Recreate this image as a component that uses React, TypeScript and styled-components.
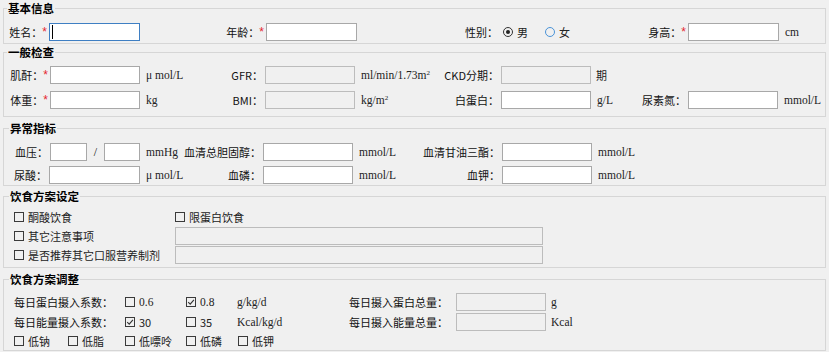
import React from "react";
import styled, { createGlobalStyle } from "styled-components";

const GlobalStyle = createGlobalStyle`
  html, body {
    margin: 0;
    background: #f0f0f0;
  }
  body {
    font-family: "Noto Sans CJK SC", "Noto Sans", sans-serif;
    font-size: 11px;
    color: #111;
  }
  #root {
    width: 829px;
    height: 352px;
    overflow: hidden;
  }
`;

const Group = styled.fieldset<{ $mt: number; $pt: number; $pb: number }>`
  margin: ${({ $mt }) => $mt}px 3px 0 3px;
  padding: ${({ $pt }) => $pt}px 0 ${({ $pb }) => $pb}px 5px;
  border: 1px solid #d6d6d6;
  min-width: 0;
  display: flex;
  flex-direction: column;
`;

const Legend = styled.legend<{ $x?: number }>`
  padding: 0 1px;
  margin-left: ${({ $x }) => $x ?? 0}px;
  font-weight: 700;
  font-size: 11.5px;
  line-height: 14px;
  color: #000;
`;

const Row = styled.div<{ $cols: string; $h: number; $mt?: number }>`
  display: grid;
  grid-template-columns: ${({ $cols }) => $cols};
  height: ${({ $h }) => $h}px;
  margin-top: ${({ $mt }) => $mt ?? 0}px;
  align-items: center;
  white-space: nowrap;
`;

const Label = styled.span<{ $left?: boolean; $pl?: number }>`
  display: flex;
  align-items: center;
  justify-content: ${({ $left }) => ($left ? "flex-start" : "flex-end")};
  padding-right: ${({ $left }) => ($left ? 0 : 2)}px;
  padding-left: ${({ $pl }) => $pl ?? 0}px;
  font-size: 11px;
  line-height: 14px;
  color: #111;
`;

const Star = styled.span`
  color: #e5262f;
  margin-left: 0;
  font-family: "Liberation Sans", sans-serif;
  font-size: 12px;
`;

const Unit = styled.span<{ $pl?: number; $cjk?: boolean }>`
  padding-left: ${({ $pl }) => $pl ?? 6}px;
  font-family: ${({ $cjk }) =>
    $cjk ? '"Noto Sans CJK SC", sans-serif' : '"Liberation Serif", serif'};
  font-size: ${({ $cjk }) => ($cjk ? 11 : 11.5)}px;
  color: #222;
  sup {
    font-size: 7px;
    vertical-align: 4px;
  }
`;

const Slash = styled.span`
  text-align: center;
  font-family: "Liberation Serif", serif;
  font-size: 12px;
`;

const BoxWrap = styled.span`
  position: relative;
  display: block;
  height: 18px;
`;

const TextBox = styled.input<{ $focus?: boolean }>`
  display: block;
  width: 100%;
  height: 18px;
  box-sizing: border-box;
  margin: 0;
  padding: 0 2px;
  border: 1px solid ${({ $focus }) => ($focus ? "#3f7fc3" : "#a8a8a8")};
  background: #fff;
  font-size: 12px;
  outline: none;
  &:disabled {
    background: #f0f0f0;
    border-color: #bcbcbc;
  }
`;

const Caret = styled.span`
  position: absolute;
  left: 3px;
  top: 2px;
  width: 1px;
  height: 14px;
  background: #000;
`;

const CheckLine = styled.span<{ $pl?: number }>`
  display: flex;
  align-items: center;
  gap: 4px;
  padding-left: ${({ $pl }) => $pl ?? 5}px;
`;

const CheckBox = styled.span`
  width: 10px;
  height: 10px;
  box-sizing: border-box;
  border: 1px solid #3a3a3a;
  display: flex;
  align-items: center;
  justify-content: center;
  flex-shrink: 0;
`;

const CheckText = styled.span<{ $mono?: boolean }>`
  font-family: ${({ $mono }) =>
    $mono ? '"Liberation Serif", serif' : '"Noto Sans CJK SC", sans-serif'};
  font-size: ${({ $mono }) => ($mono ? 11.5 : 11)}px;
  line-height: 14px;
  color: #222;
`;

const RadioLine = styled.span<{ $pl?: number }>`
  display: flex;
  align-items: center;
  gap: 4px;
  padding-left: ${({ $pl }) => $pl ?? 3}px;
`;

const RadioDot = styled.span<{ $on?: boolean }>`
  width: 10px;
  height: 10px;
  box-sizing: border-box;
  border-radius: 50%;
  border: 1px solid ${({ $on }) => ($on ? "#333" : "#4a93d8")};
  display: flex;
  align-items: center;
  justify-content: center;
  &::after {
    content: "";
    display: ${({ $on }) => ($on ? "block" : "none")};
    width: 4px;
    height: 4px;
    border-radius: 50%;
    background: #222;
  }
`;

type BoxProps = { disabled?: boolean; focus?: boolean };

const Box = ({ disabled, focus }: BoxProps) => (
  <BoxWrap>
    <TextBox disabled={disabled} $focus={focus} readOnly />
    {focus && <Caret />}
  </BoxWrap>
);

const Check = ({
  text,
  checked,
  mono,
  pl,
}: {
  text: string;
  checked?: boolean;
  mono?: boolean;
  pl?: number;
}) => (
  <CheckLine $pl={pl}>
    <CheckBox>
      {checked && (
        <svg width="8" height="8" viewBox="0 0 8 8">
          <path d="M1.2 4.2 L3.2 6.1 L6.9 1.8" fill="none" stroke="#333" strokeWidth="1.1" />
        </svg>
      )}
    </CheckBox>
    <CheckText $mono={mono}>{text}</CheckText>
  </CheckLine>
);

const Radio = ({ text, on, pl }: { text: string; on?: boolean; pl?: number }) => (
  <RadioLine $pl={pl}>
    <RadioDot $on={on} />
    <CheckText>{text}</CheckText>
  </RadioLine>
);

const Req = ({ text }: { text: string }) => (
  <Label>
    {text}
    <Star>*</Star>
  </Label>
);

const GENERAL_COLS = "41px 90px 75px 50px 90px 85px 61px 90px 49px 48px 90px 1fr";

export default function App() {
  return (
    <>
      <GlobalStyle />

      <Group $mt={1} $pt={8} $pb={2}>
        <Legend $x={-2}>基本信息</Legend>
        <Row $cols="40px 91px 126px 91px 143px 42px 58px 88px 91px 1fr" $h={18}>
          <Req text="姓名：" />
          <Box focus />
          <Req text="年龄：" />
          <Box />
          <Label>性别：</Label>
          <Radio text="男" on />
          <Radio text="女" pl={3} />
          <Req text="身高：" />
          <Box />
          <Unit>cm</Unit>
        </Row>
      </Group>

      <Group $mt={1} $pt={7} $pb={7}>
        <Legend $x={-2}>一般检查</Legend>
        <Row $cols={GENERAL_COLS} $h={18}>
          <Req text="肌酐：" />
          <Box />
          <Unit>μ mol/L</Unit>
          <Label>GFR：</Label>
          <Box disabled />
          <Unit>
            ml/min/1.73m<sup>2</sup>
          </Unit>
          <Label>CKD分期：</Label>
          <Box disabled />
          <Unit $cjk $pl={5}>
            期
          </Unit>
          <span />
          <span />
          <span />
        </Row>
        <Row $cols={GENERAL_COLS} $h={18} $mt={7}>
          <Req text="体重：" />
          <Box />
          <Unit>kg</Unit>
          <Label>BMI：</Label>
          <Box disabled />
          <Unit>
            kg/m<sup>2</sup>
          </Unit>
          <Label>白蛋白：</Label>
          <Box />
          <Unit>g/L</Unit>
          <Label>尿素氮：</Label>
          <Box />
          <Unit>mmol/L</Unit>
        </Row>
      </Group>

      <Group $mt={4} $pt={8} $pb={1}>
        <Legend>异常指标</Legend>
        <Row $cols="41px 37px 17px 36px 35px 88px 90px 60px 89px 90px 1fr" $h={18}>
          <Label>血压：</Label>
          <Box />
          <Slash>/</Slash>
          <Box />
          <Unit>mmHg</Unit>
          <Label>血清总胆固醇：</Label>
          <Box />
          <Unit>mmol/L</Unit>
          <Label>血清甘油三酯：</Label>
          <Box />
          <Unit>mmol/L</Unit>
        </Row>
        <Row $cols="40px 91px 35px 88px 90px 60px 89px 90px 1fr" $h={18} $mt={5}>
          <Label>尿酸：</Label>
          <Box />
          <Unit>μ mol/L</Unit>
          <Label>血磷：</Label>
          <Box />
          <Unit>mmol/L</Unit>
          <Label>血钾：</Label>
          <Box />
          <Unit>mmol/L</Unit>
        </Row>
      </Group>

      <Group $mt={3} $pt={4} $pb={3}>
        <Legend>饮食方案设定</Legend>
        <Row $cols="166px 368px" $h={19}>
          <Check text="酮酸饮食" />
          <Check text="限蛋白饮食" pl={0} />
        </Row>
        <Row $cols="166px 368px" $h={19}>
          <Check text="其它注意事项" />
          <Box disabled />
        </Row>
        <Row $cols="166px 368px" $h={19}>
          <Check text="是否推荐其它口服营养制剂" />
          <Box disabled />
        </Row>
      </Group>

      <Group $mt={4} $pt={6} $pb={0}>
        <Legend>饮食方案调整</Legend>
        <Row $cols="111px 61px 56px 112px 107px 90px 1fr" $h={19}>
          <Label $left $pl={5}>
            每日蛋白摄入系数：
          </Label>
          <Check text="0.6" mono />
          <Check text="0.8" mono checked />
          <Unit $pl={0}>g/kg/d</Unit>
          <Label $left>每日摄入蛋白总量：</Label>
          <Box disabled />
          <Unit $pl={5}>g</Unit>
        </Row>
        <Row $cols="111px 61px 56px 112px 107px 90px 1fr" $h={19} $mt={1}>
          <Label $left $pl={5}>
            每日能量摄入系数：
          </Label>
          <Check text="30" checked />
          <Check text="35" />
          <Unit $pl={0}>Kcal/kg/d</Unit>
          <Label $left>每日摄入能量总量：</Label>
          <Box disabled />
          <Unit $pl={5}>Kcal</Unit>
        </Row>
        <Row $cols="54px 57px 61px 52px 1fr" $h={18} $mt={1}>
          <Check text="低钠" />
          <Check text="低脂" />
          <Check text="低嘌呤" />
          <Check text="低磷" />
          <Check text="低钾" />
        </Row>
      </Group>
    </>
  );
}
